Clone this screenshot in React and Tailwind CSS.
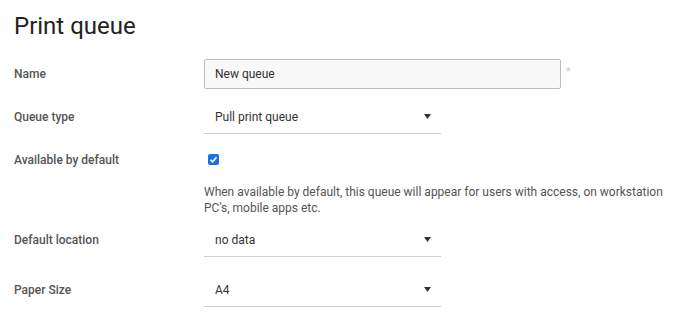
import React from 'react'

function Label({ children }) {
  return (
    <div className="w-[190px] shrink-0 text-[12px] font-medium text-[#555]">{children}</div>
  )
}

function Select({ value }) {
  return (
    <div className="flex h-[34px] w-[237px] items-center justify-between border-b border-[#d0d0d0] pl-[11px] pr-[10px] text-[12px] text-[#333]">
      <span>{value}</span>
      <svg width="7" height="5" viewBox="0 0 7 5">
        <path d="M0 0h7L3.5 5z" fill="#333" />
      </svg>
    </div>
  )
}

export default function App() {
  return (
    <div
      className="min-h-[324px] bg-white pl-[14px] pr-[14px] pt-[12px]"
      style={{ fontFamily: 'Roboto, "Liberation Sans", sans-serif' }}
    >
      <h1 className="text-[24px] leading-[28px] font-normal text-[#222]">Print queue</h1>

      {/* Name */}
      <div className="mt-[19px] flex items-center">
        <Label>Name</Label>
        <div className="h-[30px] w-[357px] rounded-[2px] border border-[#bdbdbd] bg-[#f8f8f8] pl-[10px] text-[12px] leading-[28px] text-[#333]">
          New queue
        </div>
        <span className="ml-[5px] -mt-[4px] text-[11px] text-[#ccc]">*</span>
      </div>

      {/* Queue type */}
      <div className="mt-[11px] flex items-center">
        <Label>Queue type</Label>
        <Select value="Pull print queue" />
      </div>

      {/* Available by default */}
      <div className="mt-[12px] flex h-[27px] items-center">
        <Label>Available by default</Label>
        <span className="ml-[4px] flex h-[11px] w-[11px] items-center justify-center rounded-[2px] bg-[#1b6fe8]">
          <svg width="9" height="9" viewBox="0 0 9 9">
            <path d="M1.6 4.8 3.6 6.7 7.5 2.2" fill="none" stroke="#fff" strokeWidth="1.7" />
          </svg>
        </span>
      </div>
      <div className="mt-[11px] flex">
        <div className="w-[190px] shrink-0" />
        <p className="flex-1 text-[12px] leading-[16px] text-[#555]">
          When available by default, this queue will appear for users with access, on workstation
          PC's, mobile apps etc.
        </p>
      </div>

      {/* Default location */}
      <div className="mt-[7px] flex items-center">
        <Label>Default location</Label>
        <Select value="no data" />
      </div>

      {/* Paper size */}
      <div className="mt-[16px] flex items-center">
        <Label>Paper Size</Label>
        <Select value="A4" />
      </div>
    </div>
  )
}
